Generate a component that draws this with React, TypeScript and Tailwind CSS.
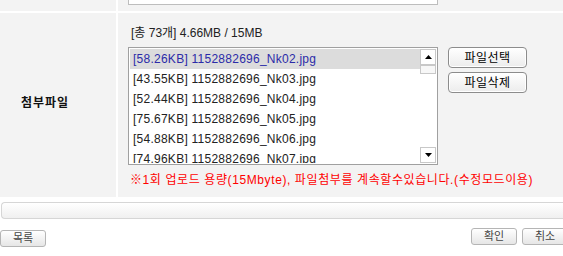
import React from 'react';

const FILES = [
  { size: '58.26KB', name: '1152882696_Nk02.jpg' },
  { size: '43.55KB', name: '1152882696_Nk03.jpg' },
  { size: '52.44KB', name: '1152882696_Nk04.jpg' },
  { size: '75.67KB', name: '1152882696_Nk05.jpg' },
  { size: '54.88KB', name: '1152882696_Nk06.jpg' },
  { size: '74.96KB', name: '1152882696_Nk07.jpg' },
];

const font = { fontFamily: '"Liberation Sans", "Noto Sans CJK KR", sans-serif' };

const SmallButton: React.FC<{ label: string; className?: string }> = ({ label, className = '' }) => (
  <button
    className={`h-[17px] rounded-[3px] border border-[#b5b5b5] bg-gradient-to-b from-white to-[#e6e6e6] text-[11px] leading-none text-[#444] ${className}`}
  >
    {label}
  </button>
);

const FileButton: React.FC<{ label: string }> = ({ label }) => (
  <button className="w-[79px] h-[21px] rounded-[4px] border border-[#8c8c8c] bg-gradient-to-b from-white to-[#ececec] text-[12px] tracking-[0.5px] leading-none text-black shadow-[inset_0_0_0_1px_#fff]">
    {label}
  </button>
);

const ScrollArrow: React.FC<{ up?: boolean }> = ({ up }) => (
  <div className="w-[16px] h-[16px] border border-[#c8c8c8] bg-white flex items-center justify-center">
    <svg width="7" height="4" viewBox="0 0 7 4">
      {up ? <polygon points="3.5,0 7,4 0,4" fill="#000" /> : <polygon points="0,0 7,0 3.5,4" fill="#000" />}
    </svg>
  </div>
);

export default function App() {
  return (
    <div className="w-[563px] h-[256px] bg-white overflow-hidden text-[12px]" style={font}>
      {/* top row (cut off) */}
      <div className="flex h-[11px] gap-[2px]">
        <div className="w-[116px] bg-[#f3f3f3]" />
        <div className="flex-1 bg-[#f3f3f3] pl-[10px]">
          <div className="w-[310px] h-[5px] bg-white border-x border-b border-[#bdbdbd]" />
        </div>
      </div>

      {/* attachment row */}
      <div className="flex h-[184px] gap-[2px] mt-[2px]">
        <div className="w-[116px] bg-[#f3f3f3] flex items-center pl-[21px] pb-[4px] font-bold text-[12px] tracking-[1px] text-[#111]">
          첨부파일
        </div>
        <div className="flex-1 bg-[#f3f3f3] pl-[10px] pt-[12px]">
          <div className="h-[16px] leading-[16px] pl-[3px] text-[#222]">[총 73개] 4.66MB / 15MB</div>
          <div className="flex items-start gap-[10px] mt-[6px]">
            <div className="w-[310px] h-[118px] border border-[#a0a0a0] bg-white flex p-[1px]">
              <div className="flex-1 overflow-hidden">
                {FILES.map((f, i) => (
                  <div
                    key={i}
                    className={`h-[20px] leading-[20px] pl-[3px] whitespace-nowrap tracking-[0.25px] ${
                      i === 0 ? 'bg-[#dcdcdc] text-[#2b2ba8]' : 'text-[#222]'
                    }`}
                  >
                    [{f.size}] {f.name}
                  </div>
                ))}
              </div>
              <div className="w-[16px] flex flex-col bg-white">
                <ScrollArrow up />
                <div className="w-[16px] h-[9px] border border-[#c8c8c8] bg-[#f7f7f7]" />
                <div className="flex-1" />
                <ScrollArrow />
              </div>
            </div>
            <div className="flex flex-col gap-[4px]">
              <FileButton label="파일선택" />
              <FileButton label="파일삭제" />
            </div>
          </div>
          <div className="h-[16px] leading-[16px] mt-[7px] pl-[2px] text-[#ff0000] whitespace-nowrap tracking-[0.6px]">
            ※1회 업로드 용량(15Mbyte), 파일첨부를 계속할수있습니다.(수정모드이용)
          </div>
        </div>
      </div>

      {/* divider bar */}
      <div className="mt-[5px] ml-[1px] h-[17px] rounded-l-[4px] border border-r-0 border-[#d6d6d6] bg-gradient-to-b from-white to-[#f0f0f0]" />

      {/* bottom buttons */}
      <div className="flex items-start justify-between mt-[9px]">
        <SmallButton label="목록" className="w-[46px] mt-[2px]" />
        <div className="flex gap-[5px] mr-[-5px]">
          <SmallButton label="확인" className="w-[46px]" />
          <SmallButton label="취소" className="w-[46px]" />
        </div>
      </div>
    </div>
  );
}
